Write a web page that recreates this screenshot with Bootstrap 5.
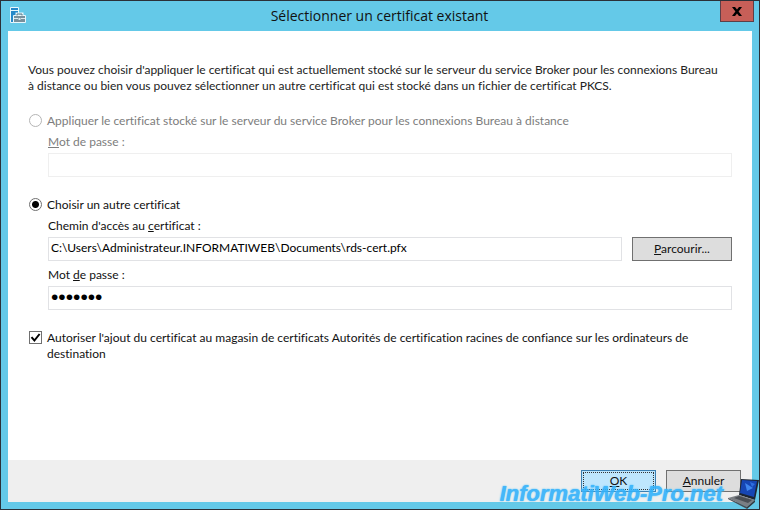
<!DOCTYPE html>
<html lang="fr">
<head>
<meta charset="utf-8">
<meta name="viewport" content="width=device-width, initial-scale=1">
<title>Sélectionner un certificat existant</title>
<link rel="stylesheet" href="https://cdn.jsdelivr.net/npm/bootstrap@5.3.0/dist/css/bootstrap.min.css">
<style>
body { font: 12px/16px Lato, "Open Sans", sans-serif; font-variant-ligatures: none; color: #111; }
.window { border: 1px solid #2b3038; background: #64c9e8; }
.titlebar { height: 30px; padding: 0 5px 0 8px; }
.titlebar h1 { font: 14px/30px "Open Sans", sans-serif; padding-left: 12px; }
.app-icon { width: 18px; height: 18px; margin-top: 5px; }
.close-btn { width: 34px; height: 21px; background: #c75f58; border: 1px solid #5d3f48; border-top: 0; }
.pane { margin: 0 7px 7px; background: #fff; }
.content { padding: 31px 20px 20px; }
.intro { margin-bottom: 19px; color: #222; padding-right: 8px; }
.group { margin: 0 0 20px 20px; }
.option { gap: 5px; padding-left: 1px; }
.option .form-check-input { width: 13px; height: 13px; margin: 1px 0 0; border-color: #707070; background-color: #fff; box-shadow: none; }
.option .form-check-input:disabled { border-color: #b5b5b5; opacity: 1; }
.option .form-check-input:disabled ~ label, .muted { color: #7d7d7d; opacity: 1; }
.option .form-check-input[type=radio]:checked { background-image: radial-gradient(circle, #000 0 3px, transparent 4px); }
.option .form-check-input[type=checkbox] { border-radius: 0; }
.option .form-check-input[type=checkbox]:checked { background-size: 11px 11px; background-image: url("data:image/svg+xml,%3Csvg xmlns='http://www.w3.org/2000/svg' viewBox='0 0 11 11'%3E%3Cpath d='M1.5 5.2 4.4 8.5 9.6 2' fill='none' stroke='%23000' stroke-width='2'/%3E%3C/svg%3E"); }
.field { height: 24px; padding: 0 2px 4px; font-size: 12px; line-height: 16px; border: 1px solid #e1e2e5; border-radius: 0; color: #000; }
.field:disabled { background: #fff; border-color: #efefef; }
.field[type=password] { padding-bottom: 2px; font-family: "Liberation Sans", Arial, sans-serif; font-size: 21px; }
.field-label { display: block; margin: 5px 0 3px; }
.browse-row { gap: 10px; margin-bottom: 6px; }
.dlg-btn { height: 24px; padding: 0; font-size: 12px; line-height: 16px; border: 1px solid #707070; border-radius: 0; background: #ddd; color: #111; }
.browse { width: 100px; }
.footer-btn { width: 75px; height: 22px; }
.ok-btn { background: #bee6fd; border-color: #3c7fb1; outline: 1px dotted #333; outline-offset: -3px; }
.actions { height: 42px; padding: 10px 11px 0; background: #efefef; gap: 10px; }
.watermark { right: 0; bottom: 0; pointer-events: none; gap: 5px; }
.watermark span { font: italic bold 22px/26px "Liberation Sans", Arial, sans-serif; color: #33b2fb; opacity: .9; text-shadow: 0 0 1px #33b2fb, 0 0 2px #6fd0ff; }
</style>
</head>
<body>
<main class="window min-vh-100 d-flex flex-column position-relative">
  <header class="titlebar d-flex align-items-start">
    <svg class="app-icon flex-shrink-0" viewBox="0 0 18 18" aria-hidden="true">
      <path d="M1.500 1.500h8v15h-8z" fill="#2588c9" stroke="#e8f7fd"/>
      <path d="M2 4.500h7" stroke="#e8f7fd"/>
      <path d="M4.500 9.500h12v7h-12z" fill="#78909c" stroke="#e8f7fd"/>
      <path d="M7.500 9V7.500h6V9" fill="none" stroke="#e8f7fd" stroke-width="2"/>
      <path d="M8 9.500V8h5v1.500" fill="none" stroke="#5d7683"/>
      <path d="M5 12.500h4M12 12.500h4" stroke="#dce8ed"/>
      <path d="M9.500 12h2v2h-2z" fill="#dce8ed"/>
    </svg>
    <h1 class="flex-grow-1 text-center m-0 fw-normal">Sélectionner un certificat existant</h1>
    <button type="button" class="close-btn p-0 d-flex align-items-center justify-content-center" aria-label="Fermer">
      <svg width="10" height="9" viewBox="0 0 10 9"><path d="M0 0h3l2 2.500L7 0h3L6.600 4.500 10 9H7L5 6.500 3 9H0l3.400-4.500z" fill="#000"/></svg>
    </button>
  </header>
  <form class="pane flex-grow-1 d-flex flex-column">
    <div class="content flex-grow-1">
      <p class="intro">Vous pouvez choisir d'appliquer le certificat qui est actuellement stocké sur le serveur du service Broker pour les connexions Bureau à distance ou bien vous pouvez sélectionner un autre certificat qui est stocké dans un fichier de certificat PKCS.</p>

      <div class="option d-flex">
        <input class="form-check-input flex-shrink-0" type="radio" name="source" id="stored" disabled>
        <label for="stored">Appliquer le certificat stocké sur le serveur du service Broker pour les connexions Bureau à distance</label>
      </div>
      <div class="group">
        <label class="field-label muted" for="storedPwd"><u>M</u>ot de passe :</label>
        <input class="form-control field" type="password" id="storedPwd" disabled>
      </div>

      <div class="option d-flex">
        <input class="form-check-input flex-shrink-0" type="radio" name="source" id="other" checked>
        <label for="other">Choisir un autre certificat</label>
      </div>
      <div class="group">
        <label class="field-label" for="path">Chemin d'accès au <u>c</u>ertificat :</label>
        <div class="d-flex browse-row">
          <input class="form-control field" type="text" id="path" value="C:\Users\Administrateur.INFORMATIWEB\Documents\rds-cert.pfx">
          <button type="button" class="btn dlg-btn browse flex-shrink-0"><u>P</u>arcourir...</button>
        </div>
        <label class="field-label" for="pwd">Mot <u>d</u>e passe :</label>
        <input class="form-control field" type="password" id="pwd" value="azertyu">
      </div>

      <div class="option d-flex">
        <input class="form-check-input flex-shrink-0" type="checkbox" id="allow" checked>
        <label for="allow">Autoriser l'ajout du certificat au magasin de certificats Autorités de certification racines de confiance sur les ordinateurs de destination</label>
      </div>
    </div>
    <footer class="actions d-flex justify-content-end">
      <button type="submit" class="btn dlg-btn footer-btn ok-btn"><u>O</u>K</button>
      <button type="button" class="btn dlg-btn footer-btn"><u>A</u>nnuler</button>
    </footer>
  </form>
  <div class="watermark position-absolute d-flex align-items-center">
    <span>InformatiWeb-Pro.net</span>
    <svg width="31" height="30" viewBox="0 0 31 30" aria-hidden="true">
      <path d="M13 0 31 1 27 21 11 16z" fill="#1d2634"/>
      <path d="M14 1 29 2 26 18 12 14z" fill="#1646b4"/>
      <path d="M17 4 25 9 19 12z" fill="#3f86ee"/>
      <path d="M22 3 27 5 24 8z" fill="#2f6fe0"/>
      <path d="M11 16 27 21 19 28 0 19z" fill="#7b7f84"/>
      <path d="M11 17 24 21 20 24 6 19z" fill="#4b4f55"/>
      <path d="M0 19 19 28v2L0 20z" fill="#4a4e54"/>
      <path d="M19 28 27 21v2l-8 7z" fill="#33373d"/>
    </svg>
  </div>
</main>
<script src="https://cdn.jsdelivr.net/npm/bootstrap@5.3.0/dist/js/bootstrap.bundle.min.js"></script>
</body>
</html>
